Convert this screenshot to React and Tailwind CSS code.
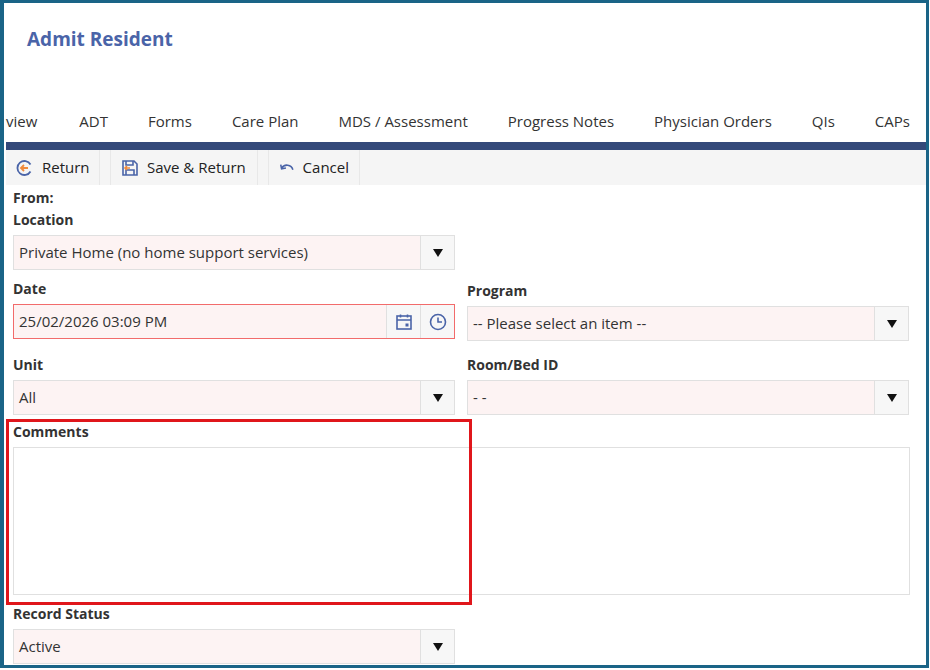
import React from "react";

const font = { fontFamily: '"Open Sans", "Noto Sans", sans-serif' };

function Caret() {
  return (
    <svg width="12" height="10" viewBox="0 0 12 10">
      <path d="M1 1h10L6 9z" fill="#111" />
    </svg>
  );
}

function Select({ value }) {
  return (
    <div className="flex h-[35px] border border-[#e0e0e0] bg-[#fdf3f3]">
      <div className="flex flex-1 items-center px-[5px] text-[15px] text-[#333]">{value}</div>
      <div className="flex w-[34px] items-center justify-center border-l border-[#e0e0e0] bg-[#f7f7f7]">
        <Caret />
      </div>
    </div>
  );
}

function Label({ children }) {
  return <div className="text-[14px] font-bold leading-[18px] text-[#333]">{children}</div>;
}

export default function App() {
  return (
    <div style={font} className="h-[670px] w-[930px] overflow-hidden bg-white">
      <div className="relative h-[668px] w-[929px] border-t-[3px] border-b-[3px] border-l-[4px] border-r-[3px] border-[#1a6487]">
        <h1 className="px-[23px] pt-[22px] text-[19px] font-bold text-[#4a64a8]">Admit Resident</h1>

        <div className="mt-[56px] flex items-center gap-[40px] pl-[2px] text-[15px] text-[#333]">
          <span className="mr-[2px]">view</span>
          <span>ADT</span>
          <span>Forms</span>
          <span>Care Plan</span>
          <span>MDS / Assessment</span>
          <span>Progress Notes</span>
          <span>Physician Orders</span>
          <span>QIs</span>
          <span>CAPs</span>
        </div>

        <div className="ml-[2px] mt-[10px] h-[8px] bg-[#34497a]" />

        <div className="ml-[2px] flex h-[35px] gap-[10px] bg-[#f5f5f5] pl-[2px] text-[15px] text-[#222]">
          <button className="flex w-[92px] items-center gap-[8px] border-r border-[#e8e8e8] px-[8px]">
            <svg width="18" height="18" viewBox="0 0 18 18" fill="none" stroke="#4a64a8" strokeWidth="1.8">
              <path d="M14.5 5.5A7 7 0 1 0 14.5 12.5" />
              <path d="M12 9H5M8 6L5 9l3 3" stroke="#f08a3c" />
            </svg>
            Return
          </button>
          <button className="flex w-[148px] items-center gap-[8px] border-x border-[#e8e8e8] px-[10px]">
            <svg width="18" height="18" viewBox="0 0 18 18" fill="none" stroke="#4a64a8" strokeWidth="1.6">
              <path d="M2 2h11l3 3v11H2z" />
              <path d="M5 2v4h7V2M5 16v-5h8v5" />
              <path d="M9 9H4M6 7L4 9l2 2" stroke="#f08a3c" />
            </svg>
            Save &amp; Return
          </button>
          <button className="flex w-[92px] items-center gap-[8px] border-x border-[#e8e8e8] px-[10px]">
            <svg width="18" height="14" viewBox="0 0 18 14" fill="none" stroke="#4a64a8" strokeWidth="1.8">
              <path d="M2 3l1 5 5-1" />
              <path d="M3 7.5A7 7 0 0 1 16 9" />
            </svg>
            Cancel
          </button>
        </div>

        <div className="px-[9px] pt-[4px]">
          <Label>From:</Label>
          <div className="mt-[4px]"><Label>Location</Label></div>
          <div className="mt-[6px] w-[442px]"><Select value="Private Home (no home support services)" /></div>

          <div className="mt-[10px] grid grid-cols-[442px_442px] gap-x-[12px]">
            <div>
              <Label>Date</Label>
              <div className="mt-[6px] flex h-[35px] border border-[#f26b6b] bg-[#fdf3f3]">
                <div className="flex flex-1 items-center px-[5px] text-[15px] text-[#333]">25/02/2026 03:09 PM</div>
                <div className="flex w-[34px] items-center justify-center border-l border-[#e0e0e0] bg-[#f7f7f7]">
                  <svg width="18" height="18" viewBox="0 0 18 18" fill="none" stroke="#4a64a8" strokeWidth="1.6">
                    <rect x="2" y="3" width="14" height="13" />
                    <path d="M2 7h14M5.5 1.5v3M12.5 1.5v3" />
                    <rect x="10.5" y="10.5" width="3" height="3" fill="#4a64a8" stroke="none" />
                  </svg>
                </div>
                <div className="flex w-[34px] items-center justify-center border-l border-[#e0e0e0] bg-[#f7f7f7]">
                  <svg width="18" height="18" viewBox="0 0 18 18" fill="none" stroke="#4a64a8" strokeWidth="1.6">
                    <circle cx="9" cy="9" r="7.5" />
                    <path d="M9 4.5V9h4" />
                  </svg>
                </div>
              </div>
            </div>
            <div className="pt-[2px]">
              <Label>Program</Label>
              <div className="mt-[6px]"><Select value="-- Please select an item --" /></div>
            </div>

            <div className="mt-[15px]">
              <Label>Unit</Label>
              <div className="mt-[6px]"><Select value="All" /></div>
            </div>
            <div className="mt-[15px]">
              <Label>Room/Bed ID</Label>
              <div className="mt-[6px]"><Select value="-  -" /></div>
            </div>
          </div>

          <div className="mt-[8px]"><Label>Comments</Label></div>
          <div className="mt-[6px] h-[148px] w-[897px] border border-[#e0e0e0]" />

          <div className="mt-[10px]"><Label>Record Status</Label></div>
          <div className="mt-[6px] w-[442px]"><Select value="Active" /></div>
        </div>

        <div className="absolute left-[2px] top-[416px] h-[186px] w-[466px] border-[3px] border-[#e0161b]" />
      </div>
    </div>
  );
}
